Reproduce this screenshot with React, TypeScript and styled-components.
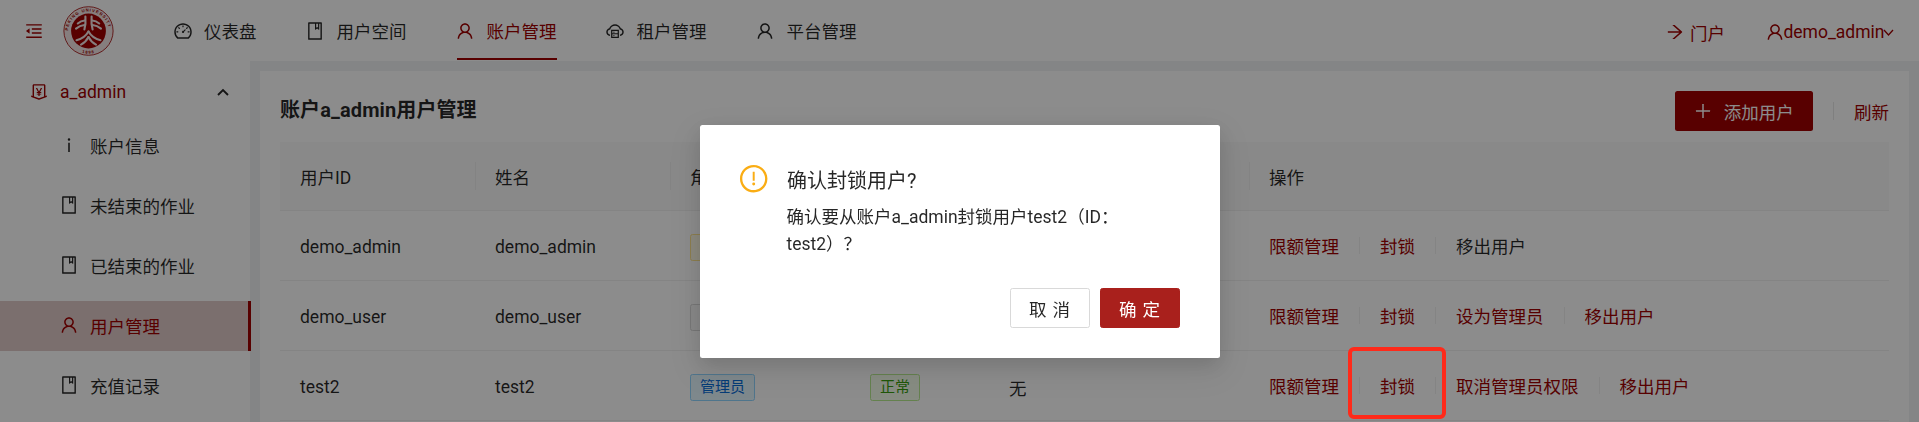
import React from 'react';
import styled, { createGlobalStyle } from 'styled-components';
import {
  AiOutlineArrowRight,
  AiOutlineBook,
  AiOutlineCloudServer,
  AiOutlineDashboard,
  AiOutlineExclamationCircle,
  AiOutlineInfo,
  AiOutlineMenuFold,
  AiOutlineMoneyCollect,
  AiOutlinePlus,
  AiOutlineUser,
} from 'react-icons/ai';

const PRIMARY = '#a00000';

const GlobalStyle = createGlobalStyle`
  html, body {
    margin: 0;
    height: 100%;
    overflow: hidden;
    background: #f0f2f5;
    font-family: Roboto, "Noto Sans CJK SC", sans-serif;
    font-size: 17.5px;
    color: rgba(0, 0, 0, 0.85);
  }
  * { box-sizing: border-box; }
`;

const Page = styled.div`
  width: 100%;
  height: 100vh;
  display: flex;
  flex-direction: column;
`;

const Header = styled.header`
  height: 61px;
  flex: none;
  background: #fff;
  display: flex;
  align-items: center;
  padding: 0 26px;
`;

const Fold = styled.span`
  display: flex;
  font-size: 20px;
  color: ${PRIMARY};
  margin: 0 -1px 0 -2px;
`;

const LogoWrap = styled.span`
  display: flex;
  margin-left: 20px;
`;

const Nav = styled.nav`
  display: flex;
  align-self: stretch;
  margin-left: 35px;
`;

const NavItem = styled.a<{ $active?: boolean }>`
  margin: 0 25px;
  display: flex;
  align-items: center;
  gap: 12.5px;
  color: ${(p) => (p.$active ? PRIMARY : 'rgba(0, 0, 0, 0.85)')};
  border-bottom: 2.5px solid ${(p) => (p.$active ? PRIMARY : 'transparent')};
  padding-top: 3px;
  height: 60px;
  white-space: nowrap;
  svg { font-size: 20px; margin: 0 -1.25px; flex: none; }
`;

const HeaderRight = styled.div`
  margin-left: auto;
  display: flex;
  align-items: center;
  color: ${PRIMARY};
  padding-top: 3px;
`;

const HeaderLink = styled.a`
  display: flex;
  align-items: center;
  gap: 6px;
  margin-right: 41px;
  svg { font-size: 20px; margin: 0 -1.25px; }
`;

const UserLink = styled.a`
  display: flex;
  align-items: center;
  svg { font-size: 20px; margin: 0 -1.25px; }
`;

const Caret = styled.svg`
  width: 11px;
  height: 7px;
  margin-left: 3px;
  fill: none;
  stroke: currentColor;
  stroke-width: 1.3;
`;

const Body = styled.div`
  flex: 1;
  min-height: 0;
  display: flex;
`;

const Sider = styled.aside`
  width: 250px;
  flex: none;
  background: #fff;
  padding-top: 7px;
`;

const SubTitle = styled.div`
  height: 50px;
  margin-bottom: 3px;
  padding: 0 21px 2px 30px;
  display: flex;
  align-items: center;
  gap: 12.5px;
  color: ${PRIMARY};
  svg { font-size: 20px; margin: 0 -1.25px; flex: none; }
`;

const Chevron = styled.svg`
  margin-left: auto;
  width: 12px;
  height: 8px;
  fill: none;
  stroke: rgba(0, 0, 0, 0.85);
  stroke-width: 1.9;
  && { font-size: 12px; margin: 0 0 0 auto; }
`;

const SideItem = styled.a<{ $active?: boolean }>`
  height: 50px;
  margin-bottom: 10px;
  padding: 0 0 2px 60px;
  display: flex;
  align-items: center;
  gap: 12.5px;
  width: ${(p) => (p.$active ? '251px' : '100%')};
  color: ${(p) => (p.$active ? PRIMARY : 'rgba(0, 0, 0, 0.85)')};
  background: ${(p) => (p.$active ? '#e0cbc9' : 'transparent')};
  border-right: ${(p) => (p.$active ? `3.5px solid ${PRIMARY}` : 'none')};
  svg { font-size: 20px; margin: 0 -1.25px; flex: none; }
`;

const Card = styled.main`
  flex: 1;
  min-width: 0;
  margin: 10px 10px 0;
  background: #fff;
  padding: 20px;
`;

const TitleRow = styled.div`
  height: 40px;
  margin-bottom: 11px;
  display: flex;
  align-items: center;
  justify-content: space-between;
`;

const Title = styled.h1`
  margin: 0 0 6px;
  font-size: 20px;
  font-weight: 700;
  letter-spacing: 0.1px;
  color: rgba(0, 0, 0, 0.85);
`;

const Tools = styled.div`
  display: flex;
  align-items: center;
`;

const AddButton = styled.button`
  height: 40px;
  width: 138px;
  border: none;
  border-radius: 2.5px;
  background: ${PRIMARY};
  color: #fff;
  font: inherit;
  display: flex;
  align-items: center;
  justify-content: center;
  gap: 12px;
  svg { font-size: 20px; margin: 0 -1.25px; }
`;

const ToolDivider = styled.span`
  width: 1px;
  height: 18px;
  background: #e8e8e8;
  margin: 0 20px;
`;

const Refresh = styled.a`
  color: ${PRIMARY};
`;

const Row = styled.div<{ $head?: boolean }>`
  display: grid;
  grid-template-columns: 195px 195px 180px 139px 260px 1fr;
  align-items: center;
  height: ${(p) => (p.$head ? '69px' : '70px')};
  background: ${(p) => (p.$head ? '#fafafa' : '#fff')};
  border-bottom: 1px solid #f0f0f0;
`;

const HeadCell = styled.div<{ $first?: boolean }>`
  padding-left: 20px;
  font-weight: 400;
  position: relative;
  &::before {
    content: '';
    display: ${(p) => (p.$first ? 'none' : 'block')};
    position: absolute;
    left: 0;
    top: 50%;
    height: 28px;
    width: 1px;
    margin-top: -14px;
    background: #efefef;
  }
`;

const Cell = styled.div`
  padding: 3px 0 0 20px;
  white-space: nowrap;
`;

const Tag = styled.span<{ $bg: string; $line: string; $fg: string }>`
  display: inline-block;
  height: 27px;
  line-height: 25px;
  padding: 0 9px;
  font-size: 15px;
  border-radius: 2.5px;
  background: ${(p) => p.$bg};
  border: 1px solid ${(p) => p.$line};
  color: ${(p) => p.$fg};
`;

const Actions = styled.div`
  display: flex;
  align-items: center;
  gap: 20px;
  padding-left: 20px;
`;

const ActionLink = styled.a<{ $plain?: boolean }>`
  color: ${(p) => (p.$plain ? 'rgba(0, 0, 0, 0.85)' : PRIMARY)};
  white-space: nowrap;
`;

const ActionDivider = styled.span`
  width: 1px;
  height: 17px;
  background: #f0f0f0;
`;

const Mask = styled.div`
  position: fixed;
  inset: 0;
  background: rgba(0, 0, 0, 0.45);
`;

const ModalWrap = styled.div`
  position: fixed;
  inset: 0;
  display: flex;
  justify-content: center;
  align-items: flex-start;
  padding-top: 125px;
`;

const Modal = styled.div`
  width: 520px;
  height: 233px;
  background: #fff;
  border-radius: 2.5px;
  padding: 40px;
  box-shadow: 0 7px 20px rgba(0, 0, 0, 0.12), 0 11px 35px 10px rgba(0, 0, 0, 0.06);
`;

const ModalHead = styled.div`
  display: flex;
  align-items: center;
  gap: 20px;
  height: 28px;
`;

const WarnIcon = styled.span`
  display: flex;
  color: #faad14;
  svg { font-size: 31.4px; margin: 0 -2px; }
`;

const ModalTitle = styled.div`
  font-size: 20px;
  font-weight: 400;
  color: rgba(0, 0, 0, 0.85);
`;

const ModalText = styled.div`
  margin: 11px 0 0 47px;
  line-height: 27px;
  color: rgba(0, 0, 0, 0.85);
`;

const ModalFooter = styled.div`
  margin-top: 30px;
  display: flex;
  justify-content: flex-end;
  gap: 10px;
`;

const ModalButton = styled.button<{ $primary?: boolean }>`
  width: 80px;
  height: 40px;
  border-radius: 2.5px;
  border: 1px solid ${(p) => (p.$primary ? '#a9201c' : '#d9d9d9')};
  background: ${(p) => (p.$primary ? '#a9201c' : '#fff')};
  color: ${(p) => (p.$primary ? '#fff' : 'rgba(0, 0, 0, 0.85)')};
  font: inherit;
  padding: 0;
  letter-spacing: 0.34em;
  text-indent: 0.34em;
`;

const Annotation = styled.div`
  position: fixed;
  left: 1348px;
  top: 347px;
  width: 98px;
  height: 72px;
  border: 4px solid #ff2a1a;
  border-radius: 6px;
`;

const Logo = () => (
  <svg width="51" height="50" viewBox="0 0 51 50">
    <defs>
      <path id="sealTop" d="M5 26a20.5 20.5 0 1 1 41 0" />
      <path id="sealBottom" d="M3.7 26a21.8 21.8 0 0 0 43.6 0" />
    </defs>
    <ellipse cx="25.5" cy="25" rx="24.6" ry="24.3" fill="#f4e6e6" stroke={PRIMARY} strokeWidth="0.8" />
    <text fontSize="4.2" fontWeight="700" fill={PRIMARY} fontFamily="Liberation Sans, sans-serif" letterSpacing="0.95">
      <textPath href="#sealTop" startOffset="2%">PEKING UNIVERSITY</textPath>
    </text>
    <text fontSize="4.2" fontWeight="700" fill={PRIMARY} fontFamily="Liberation Sans, sans-serif" letterSpacing="1">
      <textPath href="#sealBottom" startOffset="50%" textAnchor="middle">1898</textPath>
    </text>
    <circle cx="25.5" cy="25" r="17.4" fill={PRIMARY} />
    <g fill="none" stroke="#f4e6e6" strokeWidth="2.1" strokeLinecap="round">
      <path d="M22.4 10.5c.4 5 .2 9-1 13" />
      <path d="M28.6 10.5c-.4 5-.2 9 1 13" />
      <path d="M21.8 14.5c-3 .2-5 1.2-7 3" />
      <path d="M29.2 14.5c3 .2 5 1.2 7 3" />
      <path d="M21.4 19c-3.4.3-6 1.6-8.4 3.6" />
      <path d="M29.6 19c3.4.3 6 1.6 8.4 3.6" />
      <path d="M25.5 25.5c-2.6 4.6-6.6 7.4-12 8.8" />
      <path d="M25.5 25.5c2.6 4.6 6.6 7.4 12 8.8" />
      <path d="M25.5 31c-1.8 3.6-4.2 5.8-7.5 7.6" />
      <path d="M25.5 31c1.8 3.6 4.2 5.8 7.5 7.6" />
    </g>
  </svg>
);

const navItems = [
  { label: '仪表盘', icon: <AiOutlineDashboard /> },
  { label: '用户空间', icon: <AiOutlineBook /> },
  { label: '账户管理', icon: <AiOutlineUser />, active: true },
  { label: '租户管理', icon: <AiOutlineCloudServer /> },
  { label: '平台管理', icon: <AiOutlineUser /> },
];

const sideItems = [
  { label: '账户信息', icon: <AiOutlineInfo /> },
  { label: '未结束的作业', icon: <AiOutlineBook /> },
  { label: '已结束的作业', icon: <AiOutlineBook /> },
  { label: '用户管理', icon: <AiOutlineUser />, active: true },
  { label: '充值记录', icon: <AiOutlineBook /> },
];

const roleTags = {
  owner: { text: '拥有者', bg: '#fffbe6', line: '#ffe58f', fg: '#d48806' },
  user: { text: '普通用户', bg: '#fafafa', line: '#d9d9d9', fg: 'rgba(0,0,0,.85)' },
  admin: { text: '管理员', bg: '#e6f7ff', line: '#91d5ff', fg: '#096dd9' },
};

const users = [
  { id: 'demo_admin', name: 'demo_admin', role: roleTags.owner, actions: ['限额管理', '封锁', '移出用户'], plainLast: true },
  { id: 'demo_user', name: 'demo_user', role: roleTags.user, actions: ['限额管理', '封锁', '设为管理员', '移出用户'] },
  { id: 'test2', name: 'test2', role: roleTags.admin, actions: ['限额管理', '封锁', '取消管理员权限', '移出用户'] },
];

export default function App() {
  return (
    <>
      <GlobalStyle />
      <Page>
        <Header>
          <Fold><AiOutlineMenuFold /></Fold>
          <LogoWrap><Logo /></LogoWrap>
          <Nav>
            {navItems.map((item) => (
              <NavItem key={item.label} $active={item.active}>
                {item.icon}
                {item.label}
              </NavItem>
            ))}
          </Nav>
          <HeaderRight>
            <HeaderLink><AiOutlineArrowRight />门户</HeaderLink>
            <UserLink>
              <AiOutlineUser />demo_admin
              <Caret viewBox="0 0 11 7"><path d="M1 1l4.5 5L10 1" /></Caret>
            </UserLink>
          </HeaderRight>
        </Header>
        <Body>
          <Sider>
            <SubTitle>
              <AiOutlineMoneyCollect />
              a_admin
              <Chevron viewBox="0 0 12 8"><path d="M1 7l5-5 5 5" /></Chevron>
            </SubTitle>
            {sideItems.map((item) => (
              <SideItem key={item.label} $active={item.active}>
                {item.icon}
                {item.label}
              </SideItem>
            ))}
          </Sider>
          <Card>
            <TitleRow>
              <Title>账户a_admin用户管理</Title>
              <Tools>
                <AddButton><AiOutlinePlus />添加用户</AddButton>
                <ToolDivider />
                <Refresh>刷新</Refresh>
              </Tools>
            </TitleRow>
            <Row $head>
              <HeadCell $first>用户ID</HeadCell>
              <HeadCell>姓名</HeadCell>
              <HeadCell>角色</HeadCell>
              <HeadCell>状态</HeadCell>
              <HeadCell>封锁时间</HeadCell>
              <HeadCell>操作</HeadCell>
            </Row>
            {users.map((user) => (
              <Row key={user.id}>
                <Cell>{user.id}</Cell>
                <Cell>{user.name}</Cell>
                <Cell>
                  <Tag $bg={user.role.bg} $line={user.role.line} $fg={user.role.fg}>{user.role.text}</Tag>
                </Cell>
                <Cell>
                  <Tag $bg="#f6ffed" $line="#b7eb8f" $fg="#389e0d">正常</Tag>
                </Cell>
                <Cell>无</Cell>
                <Actions>
                  {user.actions.map((action, i) => (
                    <React.Fragment key={action}>
                      {i > 0 && <ActionDivider />}
                      <ActionLink $plain={user.plainLast && i === user.actions.length - 1}>{action}</ActionLink>
                    </React.Fragment>
                  ))}
                </Actions>
              </Row>
            ))}
          </Card>
        </Body>
      </Page>
      <Mask />
      <ModalWrap>
        <Modal>
          <ModalHead>
            <WarnIcon><AiOutlineExclamationCircle /></WarnIcon>
            <ModalTitle>确认封锁用户?</ModalTitle>
          </ModalHead>
          <ModalText>确认要从账户a_admin封锁用户test2（ID：test2）？</ModalText>
          <ModalFooter>
            <ModalButton>取消</ModalButton>
            <ModalButton $primary>确定</ModalButton>
          </ModalFooter>
        </Modal>
      </ModalWrap>
      <Annotation />
    </>
  );
}
